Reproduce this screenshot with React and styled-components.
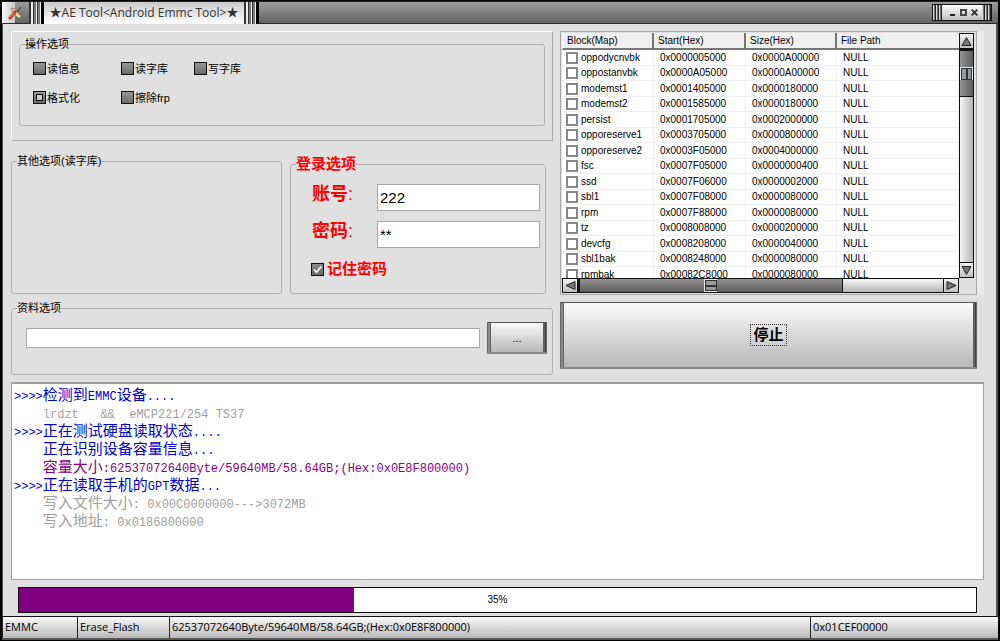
import React, { useState } from "react";
import styled, { createGlobalStyle } from "styled-components";

const GlobalStyle = createGlobalStyle`
*{
    box-sizing: border-box;
}
body{
    margin: 0;
    background-color: #000;
    font-family: "Liberation Sans", "Noto Sans CJK SC", sans-serif;
    font-size: 11px;
    line-height: 14px;
    color: #000;
}
button, input{
    font-family: inherit;
    margin: 0;
}
`

const WindowStyle = styled.div`
display: flex;
flex-flow: column;
min-height: 100vh;
background-color: #e0e0e0;
border: 2px solid #000;
border-top-width: 1px;
border-bottom-width: 1px;
`

/* title bar */

const TitleBarStyle = styled.header`
display: flex;
align-items: stretch;
height: 23px;
border-top: 1px solid #222;
border-bottom: 1px solid #2a2a2a;
background: linear-gradient(#9c9c9c, #636363);
`
const TitleIconStyle = styled.div`
display: flex;
align-items: center;
width: 27px;
padding-left: 5px;
background: linear-gradient(90deg, #f8f8f8 0px, #c8c8c8 13px, transparent 13px);
`
const GripStyle = styled.div`
width: 15px;
margin-bottom: -1px;
background: linear-gradient(90deg, #333 0px 2px, #eee 2px 4px, #333 4px 5px, #777 5px 7px, #eee 7px 8px, #333 8px 9px, #777 9px 11px, #eee 11px 12px, #000 12px 15px);
`
const TitleTabStyle = styled.h1`
width: 200px;
margin: 0 0 -1px 0;
text-align: center;
font-family: "Open Sans", "Noto Sans CJK SC", sans-serif;
font-size: 12px;
font-weight: 400;
line-height: 22px;
white-space: nowrap;
color: #333;
background: linear-gradient(#c9c9c9, #ffffff);
`
const TitleToolsStyle = styled.div`
display: flex;
align-items: center;
height: 17px;
margin: 2px 6px 0 auto;
border: 1px solid #111;
background: linear-gradient(#ffffff, #bdbdbd);
`
const ToolGripStyle = styled.div`
width: 9px;
height: 100%;
background: repeating-linear-gradient(90deg, #d8d8d8 0px, #d8d8d8 1px, #777 1px, #777 2px, #222 2px, #222 3px);
`
const ToolButtonStyle = styled.button`
display: flex;
align-items: center;
justify-content: center;
width: 11px;
height: 13px;
padding: 0;
border: none;
background: none;
`
const ToolGroupStyle = styled.div`
display: flex;
padding: 0 2px 0 5px;
`

/* body */

const BodyStyle = styled.main`
display: flex;
flex-flow: column;
flex: 1;
padding: 7px 12px 3px 8px;
border-left: 1px solid #555;
border-right: 2px solid #555;
`
const TopGridStyle = styled.div`
display: grid;
grid-template-columns: minmax(0, 542fr) minmax(0, 417fr);
column-gap: 7px;
padding-right: 7px;
`
const ColumnStyle = styled.div`
display: flex;
flex-flow: column;
`
const PanelStyle = styled.section`
padding: 5px 7px 14px 7px;
border: 1px solid #fff;
border-right-color: #a9a9a9;
border-bottom-color: #a9a9a9;
`
const GroupStyle = styled.fieldset`
min-width: 0;
margin: 0;
padding: 0 5px;
border: 1px solid #b0b0b0;
border-radius: 3px;
`
const LegendStyle = styled.legend`
padding: 0;
font-size: ${props => props.$strong ? "15px" : "11px"};
line-height: ${props => props.$strong ? "20px" : "14px"};
font-weight: ${props => props.$strong ? 700 : 400};
color: ${props => props.$strong ? "#f00" : "#000"};
`
const OptionGridStyle = styled.div`
display: grid;
grid-template-columns: 88px 73px 1fr;
row-gap: 14px;
padding: 10px 8px 20px 8px;
`
const OptionStyle = styled.label`
display: flex;
align-items: center;
gap: 1px;
height: 15px;
white-space: nowrap;
`
const RadioBox = styled.input`
display: grid;
place-items: center;
appearance: none;
width: 13px;
height: 13px;
border: 1px solid #111;
background: linear-gradient(#969696, #6c6c6c);
&:checked::after{
    content: "";
    width: 5px;
    height: 5px;
    border: 1px solid #111;
    background-color: #ccc;
}
`
const GroupRowStyle = styled.div`
display: grid;
grid-template-columns: minmax(0, 271fr) minmax(0, 256fr);
column-gap: 8px;
align-items: stretch;
margin: 13px 7px 7px 0;
`
const LoginGridStyle = styled.div`
display: grid;
grid-template-columns: 65px minmax(0, 1fr);
row-gap: 10px;
padding: 10px 0 11px 16px;
`
const LoginLabel = styled.label`
font-size: 18px;
line-height: 20px;
font-weight: 700;
color: #f00;
& > span{
    font-weight: 400;
}
`
const TextField = styled.input`
width: 100%;
min-width: 0;
height: ${props => props.$slim ? "20px" : "27px"};
padding: 0 2px;
border: 1px solid #a8a8a8;
border-radius: 0;
background-color: #fff;
font-size: 15px;
outline: none;
`
const RememberStyle = styled.div`
display: flex;
align-items: center;
gap: 3px;
margin: 0 0 14px 15px;
`
const TickBox = styled.input`
appearance: none;
width: 13px;
height: 13px;
border: 1px solid #111;
background: linear-gradient(#8c8c8c, #6c6c6c);
&:checked{
    background: url("data:image/svg+xml,%3Csvg xmlns='http://www.w3.org/2000/svg' viewBox='0 0 11 11'%3E%3Cpath d='M2 5.5l2.5 2.8L9.3 2.5' fill='none' stroke='white' stroke-width='1.7'/%3E%3C/svg%3E"), linear-gradient(#8c8c8c, #6c6c6c);
}
`
const RememberLabel = styled.label`
font-size: 15px;
line-height: 20px;
font-weight: 700;
color: #f00;
`
const FileRowStyle = styled.div`
display: flex;
align-items: center;
gap: 7px;
padding: 7px 0 20px 9px;
`
const MetalButton = styled.button`
flex: ${props => props.$fill ? "1" : "none"};
width: ${props => props.$fill ? "auto" : "60px"};
height: ${props => props.$fill ? "auto" : "32px"};
margin-bottom: ${props => props.$fill ? "6px" : "0"};
padding: 0;
border: 1px solid #666;
border-top-color: #555;
border-bottom: 2px solid #888;
background:
    linear-gradient(90deg, #8c8c8c 0px 2px, #606060 2px 3px, transparent 3px calc(100% - 3px), #606060 calc(100% - 3px) calc(100% - 1px), #444 calc(100% - 1px)),
    linear-gradient(#fafafa, #b8b8b8);
font-size: ${props => props.$fill ? "15px" : "11px"};
font-weight: ${props => props.$fill ? 700 : 400};
line-height: 20px;
color: #000;
`
const FocusText = styled.span`
display: inline-block;
padding: 0 2px;
border: 1px dotted #333;
`

/* partition list */

const ListFrame = styled.div`
display: grid;
grid-template-columns: minmax(0, 1fr) 15px;
grid-template-rows: 245px 15px;
margin-bottom: 7px;
padding: 1px 2px 1px 1px;
border: 1px solid #a9a9a9;
box-shadow: 7px 0 0 #ebebeb;
`
const ListView = styled.div`
overflow: hidden;
background-color: #fff;
`
const PartTable = styled.table`
width: 100%;
table-layout: fixed;
border-collapse: separate;
border-spacing: 0;
font-size: 10px;
line-height: 14px;
`
const HeadCell = styled.th`
width: ${props => props.$width || "auto"};
height: 17px;
padding: 0 4px;
text-align: left;
font-size: 10px;
font-weight: 400;
background-color: #f0f0f0;
border-right: 2px solid #777;
border-bottom: 2px solid #777;
&:first-child{
    border-left: 1px solid #fff;
}
&:last-child{
    border-right: none;
}
`
const PartRow = styled.tr`
height: 16px;
&:nth-child(even){
    height: 15px;
}
`
const PartCell = styled.td`
padding: 0 0 0 6px;
white-space: nowrap;
border-right: 1px solid #f0f0f0;
border-bottom: 1px solid #f0f0f0;
&:first-child{
    padding-left: 4px;
}
`
const PartLabel = styled.label`
display: flex;
align-items: center;
gap: 3px;
`
const PartCheck = styled.input`
appearance: none;
width: 12px;
height: 12px;
border: 2px solid #888;
background-color: #fff;
&:checked{
    background-color: #555;
}
`
const ScrollTrack = styled.div`
display: flex;
flex-flow: ${props => props.$vertical ? "column" : "row"};
border: 1px solid #111;
background: linear-gradient(${props => props.$vertical ? "90deg" : "180deg"}, #8e8e8e, #e4e4e4);
`
const ScrollButton = styled.button`
display: flex;
align-items: center;
justify-content: center;
width: ${props => props.$vertical ? "13px" : "14px"};
height: ${props => props.$vertical ? "14px" : "13px"};
padding: 0;
border: none;
outline: 1px solid #111;
background: linear-gradient(#f2f2f2, #c0c0c0);
`
const ScrollThumb = styled.div`
display: flex;
align-items: center;
justify-content: center;
flex: ${props => props.$vertical ? "0 0 48px" : "0 0 67%"};
margin: ${props => props.$vertical ? "1px 0 0 0" : "0 0 0 1px"};
border: 0 solid #111;
border-width: ${props => props.$vertical ? "2px 0 1px 0" : "0 1px 0 2px"};
background: linear-gradient(${props => props.$vertical ? "90deg" : "180deg"}, #949494, #5c5c5c);
`
const ThumbGrip = styled.div`
display: flex;
flex-flow: ${props => props.$vertical ? "row" : "column"};
align-items: center;
justify-content: space-between;
width: 13px;
height: 13px;
padding: 1px;
background-color: #e4eaee;
&::before, &::after{
    content: "";
    width: ${props => props.$vertical ? "4px" : "10px"};
    height: ${props => props.$vertical ? "10px" : "4px"};
    border: 1px solid #333;
    background-color: #999;
}
`
const ScrollRest = styled.div`
flex: 1;
background: linear-gradient(${props => props.$vertical ? "90deg" : "180deg"}, #f6f6f6, #b4b4b4);
`

/* log and progress */

const LogStyle = styled.div`
flex: 1;
margin-top: 7px;
padding: 4px 2px;
border: 1px solid #a0a0a0;
border-top-width: 2px;
background-color: #fff;
font-family: "Liberation Mono", "Noto Sans CJK SC", monospace;
font-size: 12px;
`
const LogLine = styled.div`
height: 18px;
line-height: 18px;
white-space: pre;
color: ${props => props.$color};
`
const LogWord = styled.span`
font-size: 15px;
`
const ProgressStyle = styled.div`
position: relative;
height: 26px;
margin: 7px 7px 0 7px;
border: 1px solid #111;
background-color: #fff;
`
const ProgressFill = styled.div`
height: 100%;
background-color: #800080;
`
const ProgressText = styled.span`
position: absolute;
inset: 0;
text-align: center;
font-size: 10px;
line-height: 24px;
`
const StatusBar = styled.footer`
display: grid;
grid-template-columns: 75px 92px 1fr 188px;
border-top: 1px solid #111;
border-bottom: 2px solid #555;
font-family: "Open Sans", sans-serif;
`
const StatusCell = styled.div`
height: 21px;
padding-left: 2px;
line-height: 19px;
white-space: nowrap;
overflow: hidden;
border-left: 1px solid #222;
background: linear-gradient(#fafafa, #b8b8b8);
`

const BLUE = "#0000d0"
const GREY = "#a0a0a0"
const PURPLE = "#880088"

const options = ["读信息", "读字库", "写字库", "格式化", "擦除frp"]

const partitions = [
    ["oppodycnvbk", "0x0000005000", "0x0000A00000"],
    ["oppostanvbk", "0x0000A05000", "0x0000A00000"],
    ["modemst1", "0x0001405000", "0x0000180000"],
    ["modemst2", "0x0001585000", "0x0000180000"],
    ["persist", "0x0001705000", "0x0002000000"],
    ["opporeserve1", "0x0003705000", "0x0000800000"],
    ["opporeserve2", "0x0003F05000", "0x0004000000"],
    ["fsc", "0x0007F05000", "0x0000000400"],
    ["ssd", "0x0007F06000", "0x0000002000"],
    ["sbl1", "0x0007F08000", "0x0000080000"],
    ["rpm", "0x0007F88000", "0x0000080000"],
    ["tz", "0x0008008000", "0x0000200000"],
    ["devcfg", "0x0008208000", "0x0000040000"],
    ["sbl1bak", "0x0008248000", "0x0000080000"],
    ["rpmbak", "0x00082C8000", "0x0000080000"],
]

const logLines = [
    { color: BLUE, text: ">>>>检测到EMMC设备...." },
    { color: GREY, text: "    lrdzt   &&  eMCP221/254 TS37" },
    { color: BLUE, text: ">>>>正在测试硬盘读取状态...." },
    { color: BLUE, text: "    正在识别设备容量信息..." },
    { color: PURPLE, text: "    容量大小:62537072640Byte/59640MB/58.64GB;(Hex:0x0E8F800000)" },
    { color: BLUE, text: ">>>>正在读取手机的GPT数据..." },
    { color: GREY, text: "    写入文件大小: 0x00C0000000--->3072MB" },
    { color: GREY, text: "    写入地址: 0x0186800000" },
]

// Chinese runs are drawn two columns wide
const splitWords = (text) => text.split(/([\u4e00-\u9fff]+)/).map((part, i) => i % 2 ? <LogWord key={i}>{part}</LogWord> : part)

const arrows = {
    up: "M5.5 1.5L10 9.5H1z",
    down: "M1 1.5h9L5.5 9.5z",
    left: "M1 5.5L10 1.5v8z",
    right: "M10 5.5L1 1.5v8z",
}

const Arrow = ({ to }) => (
    <svg width="11" height="11" viewBox="0 0 11 11" aria-hidden="true">
        <path d={arrows[to]} fill="#777" stroke="#222" strokeWidth="1" />
    </svg>
)

const AppIcon = () => (
    <svg width="16" height="16" viewBox="0 0 16 16" aria-hidden="true">
        <path d="M4 3l4 1 4 5-2 2-5-5z" fill="#efd9a0" stroke="#9a7040" strokeWidth=".8" />
        <path d="M9 9l4 3" stroke="#f0dc96" strokeWidth="2.4" />
        <path d="M14 2l-4 5" stroke="#4a545c" strokeWidth="1.4" />
        <path d="M8 7l-5 6" stroke="#c33a2c" strokeWidth="3.4" strokeLinecap="round" />
        <path d="M7 7.5l-4.5 5" stroke="#f6a898" strokeWidth="1" />
    </svg>
)

const TitleBar = () => (
    <TitleBarStyle>
        <TitleIconStyle><AppIcon /></TitleIconStyle>
        <GripStyle />
        <TitleTabStyle>★AE Tool&lt;Android Emmc Tool&gt;★</TitleTabStyle>
        <GripStyle />
        <TitleToolsStyle>
            <ToolGripStyle />
            <ToolGroupStyle>
                <ToolButtonStyle aria-label="Minimize">
                    <svg width="7" height="7" viewBox="0 0 7 7"><path d="M1 6h5" stroke="#222" strokeWidth="2" /></svg>
                </ToolButtonStyle>
                <ToolButtonStyle aria-label="Maximize">
                    <svg width="7" height="7" viewBox="0 0 7 7"><path d="M1 1h5v5H1z" fill="none" stroke="#444" strokeWidth="2" /></svg>
                </ToolButtonStyle>
                <ToolButtonStyle aria-label="Close">
                    <svg width="7" height="7" viewBox="0 0 7 7"><path d="M.7.7l5.6 5.6M6.3.7L.7 6.3" stroke="#333" strokeWidth="1.9" /></svg>
                </ToolButtonStyle>
            </ToolGroupStyle>
            <ToolGripStyle />
        </TitleToolsStyle>
    </TitleBarStyle>
)

const PartitionList = () => (
    <ListFrame>
        <ListView>
            <PartTable>
                <thead>
                    <tr>
                        <HeadCell $width="92px">Block(Map)</HeadCell>
                        <HeadCell $width="92px">Start(Hex)</HeadCell>
                        <HeadCell $width="91px">Size(Hex)</HeadCell>
                        <HeadCell>File Path</HeadCell>
                    </tr>
                </thead>
                <tbody>
                    {partitions.map(([name, start, size]) => (
                        <PartRow key={name}>
                            <PartCell><PartLabel><PartCheck type="checkbox" />{name}</PartLabel></PartCell>
                            <PartCell>{start}</PartCell>
                            <PartCell>{size}</PartCell>
                            <PartCell>NULL</PartCell>
                        </PartRow>
                    ))}
                </tbody>
            </PartTable>
        </ListView>
        <ScrollTrack $vertical>
            <ScrollButton $vertical aria-label="Scroll up"><Arrow to="up" /></ScrollButton>
            <ScrollThumb $vertical><ThumbGrip $vertical /></ScrollThumb>
            <ScrollRest $vertical />
            <ScrollButton $vertical aria-label="Scroll down"><Arrow to="down" /></ScrollButton>
        </ScrollTrack>
        <ScrollTrack>
            <ScrollButton aria-label="Scroll left"><Arrow to="left" /></ScrollButton>
            <ScrollThumb><ThumbGrip /></ScrollThumb>
            <ScrollRest />
            <ScrollButton aria-label="Scroll right"><Arrow to="right" /></ScrollButton>
        </ScrollTrack>
    </ListFrame>
)

const App = () => {
    const [action, setAction] = useState("格式化")
    const [account, setAccount] = useState("222")
    const [password, setPassword] = useState("**")
    const [remember, setRemember] = useState(true)
    const [path, setPath] = useState("")
    const percent = 35

    return (
        <WindowStyle>
            <GlobalStyle />
            <TitleBar />
            <BodyStyle>
                <TopGridStyle>
                    <ColumnStyle>
                        <PanelStyle>
                            <GroupStyle>
                                <LegendStyle>操作选项</LegendStyle>
                                <OptionGridStyle>
                                    {options.map(name => (
                                        <OptionStyle key={name}>
                                            <RadioBox type="radio" name="action" checked={action === name} onChange={() => setAction(name)} />
                                            {name}
                                        </OptionStyle>
                                    ))}
                                </OptionGridStyle>
                            </GroupStyle>
                        </PanelStyle>
                        <GroupRowStyle>
                            <GroupStyle>
                                <LegendStyle>其他选项(读字库)</LegendStyle>
                            </GroupStyle>
                            <GroupStyle>
                                <LegendStyle $strong>登录选项</LegendStyle>
                                <LoginGridStyle>
                                    <LoginLabel htmlFor="account">账号<span>:</span></LoginLabel>
                                    <TextField id="account" value={account} onChange={e => setAccount(e.target.value)} />
                                    <LoginLabel htmlFor="password">密码<span>:</span></LoginLabel>
                                    <TextField id="password" value={password} onChange={e => setPassword(e.target.value)} />
                                </LoginGridStyle>
                                <RememberStyle>
                                    <TickBox id="remember" type="checkbox" checked={remember} onChange={e => setRemember(e.target.checked)} />
                                    <RememberLabel htmlFor="remember">记住密码</RememberLabel>
                                </RememberStyle>
                            </GroupStyle>
                        </GroupRowStyle>
                        <GroupStyle>
                            <LegendStyle>资料选项</LegendStyle>
                            <FileRowStyle>
                                <TextField $slim aria-label="资料选项" value={path} onChange={e => setPath(e.target.value)} />
                                <MetalButton>...</MetalButton>
                            </FileRowStyle>
                        </GroupStyle>
                    </ColumnStyle>
                    <ColumnStyle>
                        <PartitionList />
                        <MetalButton $fill><FocusText>停止</FocusText></MetalButton>
                    </ColumnStyle>
                </TopGridStyle>
                <LogStyle>
                    {logLines.map(line => <LogLine key={line.text} $color={line.color}>{splitWords(line.text)}</LogLine>)}
                </LogStyle>
                <ProgressStyle>
                    <ProgressFill style={{ width: `${percent}%` }} />
                    <ProgressText>{percent}%</ProgressText>
                </ProgressStyle>
            </BodyStyle>
            <StatusBar>
                <StatusCell>EMMC</StatusCell>
                <StatusCell>Erase_Flash</StatusCell>
                <StatusCell>62537072640Byte/59640MB/58.64GB;(Hex:0x0E8F800000)</StatusCell>
                <StatusCell>0x01CEF00000</StatusCell>
            </StatusBar>
        </WindowStyle>
    )
}

export default App
